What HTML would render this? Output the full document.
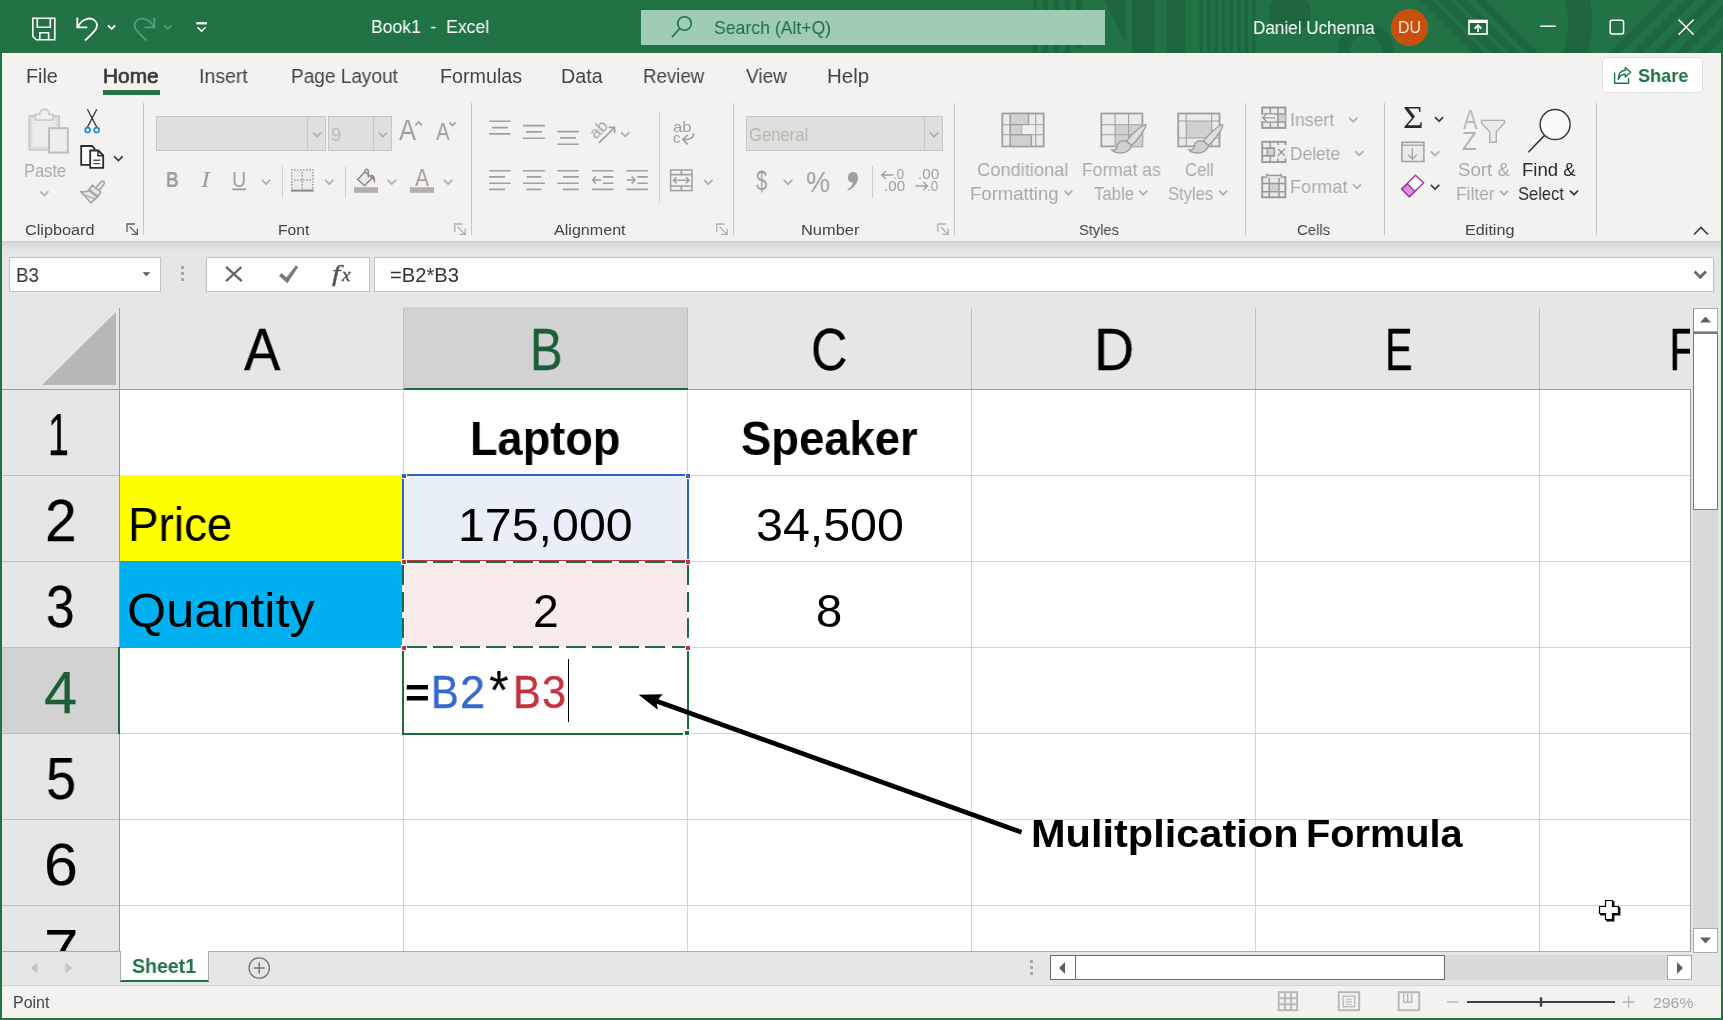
<!DOCTYPE html>
<html lang="en">
<head>
<meta charset="utf-8">
<title>Book1 - Excel</title>
<style>
html,body{margin:0;padding:0;background:#217346;}
body{width:1723px;height:1020px;overflow:hidden;position:relative;font-family:"Liberation Sans",sans-serif;}
#app{position:absolute;left:0;top:0;width:1723px;height:1020px;overflow:hidden;background:#217346;}
.b{position:absolute;box-sizing:border-box;}
.t{will-change:transform;position:absolute;white-space:pre;line-height:1;transform-origin:0 0;display:block;margin:0;padding:0;}
.sf{font-family:"Liberation Serif",serif;}
svg{position:absolute;left:0;top:0;overflow:visible;}
</style>
</head>
<body>
<div id="app">
<!-- window chrome backgrounds -->
<div class="b" style="left:0;top:0;width:1723px;height:53px;background:#217346"></div>
<div class="b" style="left:2px;top:53px;width:1719px;height:188px;background:#f3f2f1"></div>
<div class="b" style="left:2px;top:241px;width:1719px;height:745px;background:#e6e6e6"></div>
<div class="b" style="left:2px;top:241px;width:1719px;height:10px;background:linear-gradient(#cfcfcf,#dcdcdc 40%,#e6e6e6)"></div>
<div class="b" style="left:2px;top:985px;width:1719px;height:1px;background:#d2d2d2"></div>
<div class="b" style="left:2px;top:986px;width:1719px;height:32px;background:#f3f2f1"></div>
<!-- search box -->
<div class="b" style="left:641px;top:10px;width:464px;height:35px;background:#9fcdb3"></div>
<!-- avatar -->
<div class="b" style="left:1391px;top:9px;width:37px;height:37px;border-radius:50%;background:#c8500f"></div>
<!-- share -->
<div class="b" style="left:1602px;top:57px;width:101px;height:36px;background:#fff;border:1px solid #e1dfdd;border-radius:4px"></div>
<!-- home underline -->
<div class="b" style="left:103px;top:90px;width:57px;height:5px;background:#217346"></div>
<!-- ribbon combo boxes -->
<div class="b" style="left:156px;top:116px;width:170px;height:35px;background:#e1dfdd;border:1px solid #c8c6c4"></div>
<div class="b" style="left:307px;top:117px;width:1px;height:33px;background:#c8c6c4"></div>
<div class="b" style="left:328px;top:116px;width:64px;height:35px;background:#e1dfdd;border:1px solid #c8c6c4"></div>
<div class="b" style="left:373px;top:117px;width:1px;height:33px;background:#c8c6c4"></div>
<div class="b" style="left:746px;top:116px;width:197px;height:35px;background:#e1dfdd;border:1px solid #c8c6c4"></div>
<div class="b" style="left:924px;top:117px;width:1px;height:33px;background:#c8c6c4"></div>
<!-- formula bar -->
<div class="b" style="left:9px;top:257px;width:152px;height:35px;background:#fdfdfd;border:1px solid #c3c3c3"></div>
<div class="b" style="left:206px;top:257px;width:164px;height:35px;background:#fdfdfd;border:1px solid #c3c3c3"></div>
<div class="b" style="left:374px;top:257px;width:1340px;height:35px;background:#fdfdfd;border:1px solid #c3c3c3"></div>
<!-- sheet -->
<div class="b" style="left:120px;top:390px;width:1570px;height:561px;background:#fff"></div>
<!-- selected headers -->
<div class="b" style="left:404px;top:307px;width:283px;height:82px;background:#d2d2d2"></div>

<div class="b" style="left:2px;top:648px;width:116px;height:85px;background:#d2d2d2"></div>
<div class="b" style="left:118px;top:647px;width:2px;height:87px;background:#217346"></div>
<!-- cell fills -->
<div class="b" style="left:120px;top:475px;width:282px;height:86px;background:#ffff00"></div>
<div class="b" style="left:120px;top:561px;width:282px;height:87px;background:#00b0f0"></div>
<div class="b" style="left:405px;top:476px;width:282px;height:84px;background:#e9eff9"></div>
<div class="b" style="left:405px;top:563px;width:282px;height:83px;background:#f9ebeb"></div>
<svg width="1723" height="1020" viewBox="0 0 1723 1020" shape-rendering="crispEdges">
<rect x="403" y="390" width="1" height="561" fill="#d4d4d4"/>
<rect x="687" y="390" width="1" height="561" fill="#d4d4d4"/>
<rect x="971" y="390" width="1" height="561" fill="#d4d4d4"/>
<rect x="1255" y="390" width="1" height="561" fill="#d4d4d4"/>
<rect x="1539" y="390" width="1" height="561" fill="#d4d4d4"/>
<rect x="120" y="475" width="1570" height="1" fill="#d4d4d4"/>
<rect x="120" y="561" width="1570" height="1" fill="#d4d4d4"/>
<rect x="120" y="647" width="1570" height="1" fill="#d4d4d4"/>
<rect x="120" y="733" width="1570" height="1" fill="#d4d4d4"/>
<rect x="120" y="819" width="1570" height="1" fill="#d4d4d4"/>
<rect x="120" y="905" width="1570" height="1" fill="#d4d4d4"/>
<rect x="403" y="308" width="1" height="81" fill="#bdbdbd"/>
<rect x="687" y="308" width="1" height="81" fill="#bdbdbd"/>
<rect x="971" y="308" width="1" height="81" fill="#bdbdbd"/>
<rect x="1255" y="308" width="1" height="81" fill="#bdbdbd"/>
<rect x="1539" y="308" width="1" height="81" fill="#bdbdbd"/>
<rect x="2" y="475" width="117" height="1" fill="#bdbdbd"/>
<rect x="2" y="561" width="117" height="1" fill="#bdbdbd"/>
<rect x="2" y="647" width="117" height="1" fill="#bdbdbd"/>
<rect x="2" y="733" width="117" height="1" fill="#bdbdbd"/>
<rect x="2" y="819" width="117" height="1" fill="#bdbdbd"/>
<rect x="2" y="905" width="117" height="1" fill="#bdbdbd"/>
<rect x="2" y="389" width="1688" height="1" fill="#9b9b9b"/>
<rect x="119" y="308" width="1" height="643" fill="#9b9b9b"/>
<rect x="1690" y="389" width="1" height="562" fill="#9b9b9b"/>
<rect x="2" y="951" width="1689" height="1" fill="#ababab"/>
<polygon points="42,385 116,312 116,385" fill="#b7b7b7" shape-rendering="auto"/>
</svg>
<!-- re-cover grid inside filled cells and draw selection borders -->
<svg width="1723" height="1020" viewBox="0 0 1723 1020" shape-rendering="crispEdges">
<rect x="120" y="475" width="282" height="86" fill="#ffff00"/>
<rect x="120" y="561" width="282" height="87" fill="#00b0f0"/>
<!-- selected header green line redraw -->
<rect x="404" y="388" width="284" height="2" fill="#1c6b3c"/>
<rect x="118" y="647" width="2" height="87" fill="#1c6b3c"/>
<!-- B2 blue border -->
<rect x="402" y="474" width="287" height="2" fill="#2f63c4"/>
<rect x="402" y="474" width="2" height="87" fill="#2f63c4"/>
<rect x="687" y="474" width="2" height="87" fill="#2f63c4"/>
<rect x="404" y="476" width="1" height="84" fill="#fff"/>
<rect x="686" y="476" width="1" height="84" fill="#fff"/>
<!-- B3 red thin border -->
<rect x="402" y="560" width="287" height="1" fill="#c0323e"/>
<rect x="402" y="560" width="1" height="88" fill="#c0323e"/>
<rect x="688" y="560" width="1" height="88" fill="#c0323e"/>
<!-- B3 marching ants -->
<rect x="403" y="561" width="285" height="2" fill="#fff"/>
<rect x="403" y="646" width="285" height="2" fill="#fff"/>
<rect x="402" y="561" width="2" height="87" fill="#fff"/>
<rect x="686.5" y="561" width="2" height="87" fill="#fff"/>
<g stroke="#1e6b41" stroke-width="2" fill="none" stroke-dasharray="20 6.5">
<path d="M406.5 562H688"/>
<path d="M406.5 647H688"/>
<path d="M403 565V648"/>
<path d="M687.5 565V648"/>
</g>
<!-- B4 active border -->
<g fill="#1c6b3c">
<rect x="402" y="650" width="2" height="85" />
<rect x="687" y="651" width="2" height="78" />
<rect x="402" y="733" width="281" height="2" />
<rect x="684.5" y="730.5" width="5" height="5" stroke="#fff" stroke-width="1"/>
</g>
<!-- corner handles -->
<g stroke="#fff" stroke-width="1">
<rect x="401" y="473" width="5" height="5" fill="#2f63c4"/>
<rect x="685.3" y="473" width="5" height="5" fill="#2f63c4"/>
<rect x="401" y="559" width="5" height="5" fill="#c0323e"/>
<rect x="685.3" y="559" width="5" height="5" fill="#c0323e"/>
<rect x="401" y="645" width="5" height="5" fill="#c0323e"/>
<rect x="685.3" y="645" width="5" height="5" fill="#c0323e"/>
</g>
<!-- text cursor -->
<rect x="568" y="659" width="1" height="63" fill="#000"/>
</svg>
<!-- sheet tab -->
<div class="b" style="left:120px;top:951px;width:89px;height:29px;background:#fff"></div>
<div class="b" style="left:120px;top:980px;width:89px;height:2px;background:#217346"></div>
<div class="b" style="left:120px;top:951px;width:1px;height:30px;background:#ababab"></div>
<div class="b" style="left:208px;top:951px;width:1px;height:30px;background:#ababab"></div>
<!-- scrollbars -->
<div class="b" style="left:1693px;top:308px;width:25px;height:644px;background:#d9d9d9"></div>
<div class="b" style="left:1693px;top:308px;width:25px;height:24px;background:#fff;border:1px solid #ababab;border-left-color:#8a8a8a"></div>
<div class="b" style="left:1693px;top:332px;width:25px;height:178px;background:#fff;border:1px solid #7a7a7a;border-top:2px solid #7a7a7a"></div>
<div class="b" style="left:1693px;top:928px;width:25px;height:25px;background:#fff;border:1px solid #ababab"></div>
<div class="b" style="left:1050px;top:955px;width:642px;height:25px;background:#d9d9d9"></div>
<div class="b" style="left:1050px;top:955px;width:26px;height:25px;background:#fff;border:1px solid #6a6a6a"></div>
<div class="b" style="left:1075px;top:955px;width:370px;height:25px;background:#fff;border:1px solid #6a6a6a"></div>
<div class="b" style="left:1667px;top:955px;width:25px;height:25px;background:#fff;border:1px solid #ababab"></div>
<svg width="1723" height="1020" viewBox="0 0 1723 1020">
<!-- sheet nav arrows -->
<polygon points="30.5,968 37.5,962.5 37.5,973.5" fill="#c6c6c6"/>
<polygon points="72.5,968 65.5,962.5 65.5,973.5" fill="#c6c6c6"/>
<!-- new sheet -->
<circle cx="259.2" cy="968" r="10.2" fill="none" stroke="#767676" stroke-width="1.3"/>
<path d="M253.7 968H264.7M259.2 962.5V973.5" stroke="#767676" stroke-width="1.5" fill="none"/>
<!-- tab split dots -->
<g fill="#a6a6a6"><rect x="1030" y="960" width="3" height="3"/><rect x="1030" y="966" width="3" height="3"/><rect x="1030" y="972" width="3" height="3"/></g>
<!-- scrollbar arrows -->
<polygon points="1059,968 1065,962 1065,974" fill="#606060"/>
<polygon points="1683,968 1677,962 1677,974" fill="#606060"/>
<polygon points="1705.5,316.5 1700,322.5 1711,322.5" fill="#606060"/>
<polygon points="1705.5,943.5 1700,937.5 1711,937.5" fill="#606060"/>
<!-- status bar view icons -->
<g fill="none" stroke="#b9b7b5" stroke-width="1.9" transform="translate(-0.8,-0.3)">
<rect x="1279.5" y="992.5" width="18.5" height="18"/>
<path d="M1285.7 992.5V1010.5M1291.9 992.5V1010.5M1279.5 998.5H1298M1279.5 1004.5H1298"/>
<rect x="1339.5" y="992.5" width="20.5" height="18"/>
<rect x="1344" y="996.5" width="11.5" height="10.5" stroke-width="1.3"/>
<path d="M1346.5 999.5H1353M1346.5 1002H1353M1346.5 1004.5H1353" stroke-width="1"/>
<rect x="1399.5" y="992.5" width="20.5" height="18"/>
<path d="M1404.5 992.5V1002.5H1412.5V992.5M1408.5 992.5V1002.5" stroke-width="1.4"/>
</g>
<!-- zoom slider -->
<path d="M1447 1002H1458.5" stroke="#b5b3b1" stroke-width="1.3"/>
<path d="M1467 1002H1615" stroke="#404040" stroke-width="2"/>
<rect x="1539.8" y="997.3" width="2.4" height="9.4" fill="#404040"/>
<path d="M1623 1002H1634.5M1628.7 996.3V1007.7" stroke="#b5b3b1" stroke-width="1.3"/>
</svg>
<!-- annotation arrow + mouse cursor -->
<svg width="1723" height="1020" viewBox="0 0 1723 1020">
<path d="M1021.5 832.3L652 699.5" stroke="#000" stroke-width="4.8" fill="none"/>
<polygon points="638.6,694.8 662.6,694.2 656.4,701.4 657.8,709.8" fill="#000"/>
<!-- cell cursor -->
<g>
<path d="M1605.5 900.5h7v6h6v7h-6v6h-7v-6h-6v-7h6z" fill="#000" stroke="#000" stroke-width="1.2" transform="translate(1.3,1.3)"/>
<path d="M1605.5 900.5h7v6h6v7h-6v6h-7v-6h-6v-7h6z" fill="#fff" stroke="#000" stroke-width="1.2"/>
</g>
</svg>
<!-- title bar decoration + icons -->
<svg width="1723" height="1020" viewBox="0 0 1723 1020">
<defs><clipPath id="tb"><rect x="0" y="0" width="1723" height="53"/></clipPath></defs>
<g clip-path="url(#tb)" fill="#1e6640">
<rect x="1033" y="0" width="4" height="53"/><rect x="1043" y="0" width="5" height="53"/><rect x="1054" y="0" width="5" height="53"/><rect x="1065" y="0" width="5" height="53"/><rect x="1076" y="0" width="6" height="48"/>
<polygon points="1104,0 1126,0 1126,44"/>
<rect x="1132" y="0" width="23" height="53"/>
<rect x="1167" y="0" width="18" height="53"/>
<rect x="1199.5" y="0" width="3.5" height="53"/><rect x="1207" y="0" width="3.5" height="53"/><rect x="1214.5" y="0" width="3.5" height="53"/><rect x="1222" y="0" width="3.5" height="53"/><rect x="1229.5" y="0" width="3.5" height="53"/><rect x="1237" y="0" width="3.5" height="53"/><rect x="1244.5" y="0" width="3.5" height="53"/><rect x="1252" y="0" width="3.5" height="53"/>
<circle cx="1290" cy="13" r="21"/>
<circle cx="1366" cy="51" r="22" fill="none" stroke="#1e6640" stroke-width="12"/>
<g stroke="#1e6640" stroke-width="8" fill="none">
<path d="M1420 -6L1490 64M1438 -6L1508 64M1456 -6L1526 64M1474 -6L1544 64"/>
<path d="M1604 64L1684 -16M1626 64L1706 -16M1648 64L1728 -16M1670 64L1750 -16M1692 64L1772 -16"/>
</g>
<path d="M1565.3 -33A110 110 0 0 1 1565.3 77" fill="none" stroke="#1e6640" stroke-width="24"/>
</g>
<!-- search box over decoration handled by z-order: redraw -->
<rect x="641" y="10" width="464" height="35" fill="#9fcdb3"/>
<circle cx="1409.5" cy="27.5" r="18.3" fill="#c8500f"/>
<!-- save -->
<g fill="none" stroke="#fff" stroke-width="1.6" stroke-linejoin="miter">
<path d="M32.8 18.3H54.8V39.7H36.3L32.8 36.2Z"/>
<path d="M37.3 18.3V27.3H50.3V18.3"/>
<path d="M39.8 39.7V32.8H48.6V39.7"/>
</g>
<!-- undo -->
<g fill="none" stroke="#fff" stroke-width="1.8">
<path d="M77.3 17.5V27.4H87.3"/>
<path d="M78 27C81 19.5 90.5 15.8 95.2 21C99.5 26 96.5 30 85 40.5"/>
<path d="M108 25.3L111.6 28.9L115.2 25.3"/>
</g>
<!-- redo (dim) -->
<g fill="none" stroke="#58a07c" stroke-width="1.7">
<path d="M154.3 17.5V27.4H144.3"/>
<path d="M153.6 27C150.6 19.5 141.1 15.8 136.4 21C132.1 26 135.1 30 146.6 40.5"/>
<path d="M164.2 25.3L167.8 28.9L171.4 25.3"/>
</g>
<!-- customize QAT -->
<g fill="none" stroke="#fff" stroke-width="1.6">
<path d="M196.3 23.3H207" stroke-width="2.2"/>
<path d="M197.6 27.3L201.6 31.2L205.6 27.3"/>
</g>
<!-- search icon -->
<g fill="none" stroke="#1e6e42" stroke-width="1.6">
<circle cx="684.5" cy="23.5" r="6.8"/>
<path d="M679.6 28.4L671.9 37.3"/>
</g>
<!-- ribbon display options -->
<g fill="none" stroke="#fff" stroke-width="1.6">
<rect x="1469" y="20.5" width="18" height="13.5"/>
<path d="M1469 21.5H1487" stroke-width="3"/>
<path d="M1478 32V25.5M1474.6 28.6L1478 25.2L1481.4 28.6"/>
</g>
<!-- min / max / close -->
<g fill="none" stroke="#fff" stroke-width="1.5">
<path d="M1540.3 26.2H1555.8"/>
<rect x="1610.2" y="20.3" width="13.4" height="13.6" rx="2"/>
<path d="M1678.5 19.5L1693.7 34.8M1693.7 19.5L1678.5 34.8"/>
</g>
<!-- share icon -->
<g fill="none" stroke="#217346" stroke-width="1.4" stroke-linejoin="round">
<path d="M1614.6 72.4V83.2H1628.6V78"/>
<path d="M1625.3 67.6L1630.6 72.3L1625.3 77V74.3C1621.5 74.3 1619.5 76 1618.3 79.5C1618.3 74 1620.5 70.6 1625.3 70.3Z"/>
</g>
</svg>
<!-- ribbon icons -->
<svg width="1723" height="1020" viewBox="0 0 1723 1020">
<rect x="143.0" y="103" width="1" height="132" fill="#c8c6c4"/>
<rect x="471.0" y="103" width="1" height="132" fill="#c8c6c4"/>
<rect x="733.0" y="103" width="1" height="132" fill="#c8c6c4"/>
<rect x="954.0" y="103" width="1" height="132" fill="#c8c6c4"/>
<rect x="1245.0" y="103" width="1" height="132" fill="#c8c6c4"/>
<rect x="1384.0" y="103" width="1" height="132" fill="#c8c6c4"/>
<rect x="1596.0" y="103" width="1" height="132" fill="#c8c6c4"/>
<rect x="282.0" y="166" width="1" height="32" fill="#d2d0ce"/>
<rect x="345.0" y="166" width="1" height="32" fill="#d2d0ce"/>
<rect x="659.0" y="112" width="1" height="91" fill="#d2d0ce"/>
<rect x="872.0" y="166" width="1" height="32" fill="#d2d0ce"/>
<path d="M40.2 191.3L44.3 195.5L48.4 191.3" fill="none" stroke="#b0aeac" stroke-width="1.7"/>
<path d="M114.2 156.3L118.4 160.5L122.6 156.3" fill="none" stroke="#3b3a39" stroke-width="1.7"/>
<path d="M313.2 132.6L317.1 136.6L321.0 132.6" fill="none" stroke="#b0aeac" stroke-width="1.7"/>
<path d="M378.8 132.6L382.9 136.6L387.0 132.6" fill="none" stroke="#b0aeac" stroke-width="1.7"/>
<path d="M262.0 179.9L266.1 184.1L270.2 179.9" fill="none" stroke="#b0aeac" stroke-width="1.7"/>
<path d="M325.0 179.9L329.2 184.1L333.4 179.9" fill="none" stroke="#b0aeac" stroke-width="1.7"/>
<path d="M387.6 179.9L391.8 184.1L396.0 179.9" fill="none" stroke="#b0aeac" stroke-width="1.7"/>
<path d="M443.9 179.9L448.1 184.1L452.4 179.9" fill="none" stroke="#b0aeac" stroke-width="1.7"/>
<path d="M621.0 132.1L625.1 136.3L629.3 132.1" fill="none" stroke="#b0aeac" stroke-width="1.7"/>
<path d="M704.0 179.8L708.3 184.2L712.6 179.8" fill="none" stroke="#b0aeac" stroke-width="1.7"/>
<path d="M929.7 132.4L934.0 136.8L938.4 132.4" fill="none" stroke="#b0aeac" stroke-width="1.7"/>
<path d="M783.7 179.8L788.0 184.2L792.4 179.8" fill="none" stroke="#b0aeac" stroke-width="1.7"/>
<path d="M1064.4 190.7L1068.3 194.7L1072.3 190.7" fill="none" stroke="#b0aeac" stroke-width="1.7"/>
<path d="M1139.4 190.7L1143.3 194.7L1147.3 190.7" fill="none" stroke="#b0aeac" stroke-width="1.7"/>
<path d="M1219.3 190.7L1223.2 194.7L1227.2 190.7" fill="none" stroke="#b0aeac" stroke-width="1.7"/>
<path d="M1349.0 117.6L1353.2 121.8L1357.4 117.6" fill="none" stroke="#b0aeac" stroke-width="1.7"/>
<path d="M1355.0 151.1L1359.2 155.3L1363.3 151.1" fill="none" stroke="#b0aeac" stroke-width="1.7"/>
<path d="M1353.0 184.4L1357.0 188.4L1361.0 184.4" fill="none" stroke="#b0aeac" stroke-width="1.7"/>
<path d="M1435.0 117.2L1439.1 121.4L1443.2 117.2" fill="none" stroke="#3b3a39" stroke-width="1.7"/>
<path d="M1430.8 151.3L1435.0 155.5L1439.3 151.3" fill="none" stroke="#b0aeac" stroke-width="1.7"/>
<path d="M1430.8 184.9L1435.0 189.1L1439.3 184.9" fill="none" stroke="#3b3a39" stroke-width="1.7"/>
<path d="M1500.0 190.7L1504.0 194.7L1508.0 190.7" fill="none" stroke="#b0aeac" stroke-width="1.7"/>
<path d="M1570.0 190.7L1574.0 194.7L1578.0 190.7" fill="none" stroke="#3b3a39" stroke-width="1.7"/>
<path d="M1694 234.5L1701 227.5L1708 234.5" fill="none" stroke="#3b3a39" stroke-width="1.7"/>
<g fill="none" stroke="#605e5c" stroke-width="1.3"><path d="M127.0 231.9V224.0H134.9"/><path d="M130.0 227.0L137.4 234.4M137.4 228.6V234.4H131.6"/></g>
<g fill="none" stroke="#b0aeac" stroke-width="1.3"><path d="M454.8 231.9V224.0H462.7"/><path d="M457.8 227.0L465.2 234.4M465.2 228.6V234.4H459.4"/></g>
<g fill="none" stroke="#b0aeac" stroke-width="1.3"><path d="M716.8000000000001 231.9V224.0H724.7"/><path d="M719.8000000000001 227.0L727.2 234.4M727.2 228.6V234.4H721.4000000000001"/></g>
<g fill="none" stroke="#b0aeac" stroke-width="1.3"><path d="M937.8000000000001 231.9V224.0H945.7"/><path d="M940.8000000000001 227.0L948.2 234.4M948.2 228.6V234.4H942.4000000000001"/></g>
<!-- clipboard group -->
<g>
<rect x="29.4" y="116.1" width="29.5" height="33.6" fill="#ececec" stroke="#c8c8c8" stroke-width="2"/>
<rect x="31.4" y="118.1" width="25.5" height="29.6" fill="none" stroke="#dedede" stroke-width="2"/>
<path d="M35.4 120V114.3H39.6C39.6 107.6 49 107.6 49 114.3H53V120Z" fill="#f1f1f1" stroke="#c8c8c8" stroke-width="1.7"/>
<rect x="49" y="128.2" width="18.8" height="24.4" fill="#eeeeee" stroke="#bdbdbd" stroke-width="2"/>
</g>
<g fill="none" stroke="#3b3a39" stroke-width="1.3">
<path d="M87.4 109.2L96.9 127.4M96.8 109.2L87.3 127.4"/>
</g>
<g fill="#fff" stroke="#1e8ad6" stroke-width="1.7">
<circle cx="87.6" cy="130.1" r="2.4"/><circle cx="96.6" cy="130.1" r="2.4"/>
</g>
<g fill="#fafafa" stroke="#2b2b2b" stroke-width="1.8" stroke-linejoin="miter">
<path d="M81.2 146H92L94.5 148.5V164.8H81.2Z"/>
<path d="M90.2 150.5H98.3L103.2 155.4V167.8H90.2Z" fill="#fff"/>
<path d="M98 150.5V155.7H103.2" fill="none" stroke-width="1.5"/>
<path d="M93.2 160.3H100.3M93.2 163.6H100.3" stroke-width="1.4" stroke="#555"/>
</g>
<g fill="#e8e6e4" stroke="#a8a6a4" stroke-width="1.7" stroke-linejoin="round">
<path d="M101.6 181.4C103.4 180.2 105.2 182.4 104 184L98.9 190.6L95.6 188Z" fill="#f3f2f1"/>
<path d="M92.2 185.2L100.8 192.2L97.8 196.4L89.2 189.6Z"/>
<path d="M89 190.5C86.5 191.8 83.5 192 80.8 191.7L90.8 202.8L97.4 196.8Z"/>
<path d="M85.5 195C88.5 196.8 91.5 198 94.6 198.4" fill="none" stroke-width="1.2"/>
</g>
<!-- font group -->
<g fill="none" stroke="#a19f9d" stroke-width="1.7">
<path d="M415.4 125.4L418.6 122L421.8 125.4"/>
<path d="M449.3 122.3L452.5 125.5L455.7 122.3"/>
<path d="M232.3 189.3H246" stroke-width="1.9"/>
</g>
<!-- borders icon -->
<rect x="292" y="170" width="21" height="20" fill="#eeedec"/>
<g fill="#9a9896"><rect x="291.05" y="169.15" width="1.5" height="1.5"/><rect x="294.06" y="169.15" width="1.5" height="1.5"/><rect x="297.08" y="169.15" width="1.5" height="1.5"/><rect x="300.10" y="169.15" width="1.5" height="1.5"/><rect x="303.11" y="169.15" width="1.5" height="1.5"/><rect x="306.12" y="169.15" width="1.5" height="1.5"/><rect x="309.14" y="169.15" width="1.5" height="1.5"/><rect x="312.16" y="169.15" width="1.5" height="1.5"/><rect x="291.05" y="172.14" width="1.5" height="1.5"/><rect x="312.15" y="172.14" width="1.5" height="1.5"/><rect x="301.45" y="172.14" width="1.5" height="1.5"/><rect x="291.05" y="175.12" width="1.5" height="1.5"/><rect x="312.15" y="175.12" width="1.5" height="1.5"/><rect x="301.45" y="175.12" width="1.5" height="1.5"/><rect x="291.05" y="178.11" width="1.5" height="1.5"/><rect x="312.15" y="178.11" width="1.5" height="1.5"/><rect x="301.45" y="178.11" width="1.5" height="1.5"/><rect x="291.05" y="181.09" width="1.5" height="1.5"/><rect x="312.15" y="181.09" width="1.5" height="1.5"/><rect x="301.45" y="181.09" width="1.5" height="1.5"/><rect x="291.05" y="184.08" width="1.5" height="1.5"/><rect x="312.15" y="184.08" width="1.5" height="1.5"/><rect x="301.45" y="184.08" width="1.5" height="1.5"/><rect x="291.05" y="187.06" width="1.5" height="1.5"/><rect x="312.15" y="187.06" width="1.5" height="1.5"/><rect x="301.45" y="187.06" width="1.5" height="1.5"/><rect x="294.06" y="179.35" width="1.5" height="1.5"/><rect x="297.08" y="179.35" width="1.5" height="1.5"/><rect x="300.10" y="179.35" width="1.5" height="1.5"/><rect x="303.11" y="179.35" width="1.5" height="1.5"/><rect x="306.12" y="179.35" width="1.5" height="1.5"/><rect x="309.14" y="179.35" width="1.5" height="1.5"/></g>
<rect x="291" y="189.6" width="22.7" height="2" fill="#8a8886"/>
<!-- fill colour bucket -->
<g fill="none" stroke="#8f8d8b" stroke-width="1.5" stroke-linejoin="miter">
<path d="M365 171.8L372.2 177.8L364.5 185.8L357.8 179.4Z" fill="#ebebeb"/>
<path d="M365.2 172.2C364.8 168.6 368.4 168.4 368.3 171.5V177.5"/>
</g>
<path d="M371 174.5C373.5 174.2 376.2 177.5 374.9 184C373.8 180.5 372.6 178.6 370.6 177Z" fill="#8f8d8b"/>
<rect x="354" y="187.2" width="24" height="5.6" fill="#b3aeab"/>
<rect x="410" y="187.2" width="24" height="5.6" fill="#b3aeab"/>
<!-- alignment group -->
<g fill="none" stroke="#a19f9d" stroke-width="1.6">
<path d="M489.2 121.3H510.7M492 127.6H508M489.2 133.9H510.7"/>
<path d="M523 125.6H544.8M526 131.9H541.8M523 138.2H544.8"/>
<path d="M557.3 131.6H578.8M560 137.9H576M557.3 144.2H578.8"/>
<path d="M489.2 170.7H510.7M489.2 176.9H505M489.2 183.2H510.7M489.2 189.4H505"/>
<path d="M523 170.7H544.8M526.5 176.9H541.3M523 183.2H544.8M526.5 189.4H541.3"/>
<path d="M557.3 170.7H578.8M563 176.9H578.8M557.3 183.2H578.8M563 189.4H578.8"/>
<path d="M592.2 170.7H613.5M603 176.9H613.5M603 183.2H613.5M592.2 189.4H613.5M592.6 180H601M596 176.5L592.6 180L596 183.5"/>
<path d="M626.3 170.7H647.8M637.3 176.9H647.8M637.3 183.2H647.8M626.3 189.4H647.8M626.6 180H635M631.6 176.5L635 180L631.6 183.5"/>
<!-- orientation arrow -->
<path d="M598.9 142.9L614.4 127.6M608.8 127.4H614.6V133"/>
<!-- wrap arrow -->
<path d="M693.4 133.3C694 137.5 690.5 139.8 683.2 139.6M687.7 134.8L682.8 139.6L687.7 144.4"/>
<!-- merge -->
<rect x="670.6" y="170" width="21.4" height="20.6" stroke-width="1.5"/>
<path d="M670.6 174.6H692M670.6 186H692M681.3 170V174.6M681.3 186V190.6"/>
<path d="M673.5 180.3H689M676.5 177.3L673.5 180.3L676.5 183.3M686 177.3L689 180.3L686 183.3"/>
</g>
<!-- number group: comma glyph + decimals arrows -->
<path d="M851.5 172.3C855.5 171.3 858.3 173.8 858 178C857.6 183.5 853.5 188.5 847.8 190.6L847.3 189.6C850.8 187.8 852.8 185 852.6 182.3C849.8 182.6 847.6 180.3 847.8 177.3C848 174.8 849.5 173 851.5 172.3Z" fill="#a19f9d"/>
<g fill="none" stroke="#a19f9d" stroke-width="1.3">
<path d="M881.8 175H893.5M886 171L881.8 175L886 179"/>
<path d="M915.5 186H927.5M923.3 182L927.5 186L923.3 190"/>
</g>
<!-- styles group -->
<g stroke="#a19f9d" stroke-width="1.4" fill="none">
<rect x="1002.3" y="113.5" width="41.4" height="32.9" fill="#edebe9" stroke-width="1.8"/>
<path d="M1010.3 113.5V146.4M1035.7 113.5V146.4M1028.5 113.5V146.4M1002.3 124.7H1043.7M1002.3 134.8H1043.7" stroke-width="1.1"/>
<rect x="1010.3" y="113.5" width="18.2" height="11.2" fill="#d2d0ce"/>
<rect x="1010.3" y="124.7" width="11.9" height="10.1" fill="#d2d0ce"/>
<rect x="1022.2" y="125.4" width="13" height="8.8" fill="#f0efee" stroke="none"/>
<rect x="1010.3" y="134.8" width="21.1" height="11.6" fill="#d2d0ce"/>
<!-- format as table -->
<rect x="1101.3" y="113.5" width="41.1" height="32.9" fill="#edebe9" stroke-width="1.8"/>
<rect x="1115.1" y="124.7" width="27.3" height="21.7" fill="#d2d0ce" stroke="none"/>
<path d="M1115.1 113.5V146.4M1128.6 113.5V146.4M1101.3 124.7H1142.4M1101.3 134.8H1142.4" stroke-width="1.1"/>
<g id="brush">
<path d="M1145.8 124.6C1146.5 127.5 1137.5 140.5 1131.5 145.3L1126.3 141.3C1131.5 134.5 1142.5 124.3 1145.8 124.6Z" fill="#e1dfdd"/>
<path d="M1126 141.2C1121 139.5 1116.5 143 1117.3 147.2C1116.6 149 1114.3 150 1111.8 150C1117 154.5 1128.5 154.6 1131.7 145.4Z" fill="#d2d0ce"/>
</g>
<!-- cell styles -->
<rect x="1178.2" y="113.5" width="41.3" height="32.9" fill="#edebe9" stroke-width="1.8"/>
<rect x="1186.2" y="121" width="25.5" height="17" fill="#d2d0ce" stroke="none"/>
<path d="M1186.2 113.5V146.4M1211.7 113.5V146.4M1178.2 121H1219.5M1178.2 138H1219.5" stroke-width="1.1"/>
<use href="#brush" x="77"/>
</g>
<!-- cells group -->
<g stroke="#9a9896" stroke-width="1.9" fill="none">
<rect x="1262.2" y="107.5" width="23.2" height="20.4" fill="#edebe9"/>
<rect x="1277.9" y="113.9" width="7.5" height="8.1" fill="#d2d0ce" stroke="none"/>
<path d="M1270.3 107.5V127.9M1277.9 107.5V127.9M1262.2 113.9H1285.4M1262.2 122H1285.4" stroke-width="1.5"/>
<rect x="1261.4" y="114.6" width="12.6" height="6.6" fill="#f3f2f1" stroke="none"/>
<path d="M1263 117.8H1275M1266.8 113.8L1262.8 117.8L1266.8 121.8" stroke-width="1.3"/>
<rect x="1262.2" y="141.8" width="23.2" height="20.3" fill="#edebe9"/>
<path d="M1270.3 141.8V162.1M1277.9 141.8V162.1M1262.2 148.2H1285.4M1262.2 155.7H1285.4" stroke-width="1.5"/>
<rect x="1275" y="145" width="11.5" height="13.5" fill="#f0efee" stroke="none"/>
<rect x="1267.4" y="148.2" width="7" height="7.5" fill="#d2d0ce" stroke-width="1.5"/>
<path d="M1278 148.8L1284.8 155.7M1284.8 148.8L1278 155.7" stroke-width="1.3"/>
<rect x="1262.2" y="177.2" width="23.2" height="20.1" fill="#edebe9"/>
<rect x="1269.2" y="183.6" width="9.8" height="8.1" fill="#d2d0ce" stroke="none"/>
<path d="M1269.2 177.2V197.3M1279 177.2V197.3M1262.2 183.6H1285.4M1262.2 191.7H1285.4" stroke-width="1.5"/>
<rect x="1265.5" y="173.5" width="17" height="4.4" fill="#f3f2f1" stroke="none"/>
<path d="M1266.8 173.4V177.6M1281.3 173.4V177.6M1266.8 175.5H1281.3" stroke-width="1.5"/>
</g>
<!-- editing group -->
<g stroke="#a19f9d" stroke-width="1.5" fill="none">
<rect x="1401.9" y="142.3" width="22" height="19.2" fill="#ebebeb"/>
<path d="M1401.9 145.2H1423.9" stroke-width="1.2"/>
<path d="M1412.3 148.2V159M1407.8 154.6L1412.3 159.1L1416.8 154.6" stroke-width="1.3"/>
</g>
<g stroke="#a33ea1" stroke-width="1.5" stroke-linejoin="miter">
<path d="M1415.4 175.2L1423.6 182.7L1409.3 196.7L1401.7 189.1Z" fill="#fbfbfb"/>
<path d="M1407.3 183.7L1414.9 191.4L1409.3 196.7L1401.7 189.1Z" fill="#d992dc"/>
</g>
<!-- sort funnel -->
<path d="M1481.5 120.4H1504.5V123L1496.3 131.8V142.3H1489.7V131.8L1481.5 123Z" fill="#edebe9" stroke="#b0aeac" stroke-width="1.4"/>
<!-- find magnifier -->
<circle cx="1555.1" cy="124.6" r="15" fill="#fafafa" stroke="#3b3a39" stroke-width="1.5"/>
<path d="M1544.3 135.6L1528.3 152.2" stroke="#3b3a39" stroke-width="1.6" fill="none"/>
<!-- formula bar icons -->
<g fill="#a6a6a6"><rect x="181" y="266" width="3" height="3"/><rect x="181" y="272" width="3" height="3"/><rect x="181" y="278" width="3" height="3"/></g>
<path d="M226 266.8L241.8 281.2M241.4 267L226 281.2" stroke="#666" stroke-width="2.3" fill="none"/>
<path d="M279 275.8L281.6 273L286.4 277.6L295.8 265.6L298.2 267L287.4 283.2Z" fill="#7a7a7a"/>
<polygon points="142.5,272.3 150.3,272.3 146.4,276.3" fill="#605e5c"/>
<path d="M1694.6 271.6L1700.3 277.2L1706 271.6" stroke="#666" stroke-width="2.8" fill="none"/>
</svg>
<!-- texts -->
<span class="t" style="left:371.05px;top:18.00px;font-size:18.84px;color:#fff;transform:scaleX(0.9325);">Book1  -  Excel</span>
<span class="t" style="left:714.06px;top:19.00px;font-size:18.26px;color:#1e6e42;transform:scaleX(0.9662);">Search (Alt+Q)</span>
<span class="t" style="left:1253.19px;top:19.00px;font-size:18.26px;color:#fff;transform:scaleX(0.9370);">Daniel Uchenna</span>
<span class="t" style="left:1397.51px;top:20.00px;font-size:15.94px;color:#fbe3d6;transform:scaleX(0.9857);">DU</span>
<span class="t" style="left:25.88px;top:67.00px;font-size:19.71px;color:#444;transform:scaleX(1.0039);">File</span>
<span class="t" style="left:198.95px;top:67.00px;font-size:19.71px;color:#444;transform:scaleX(0.9896);">Insert</span>
<span class="t" style="left:291.44px;top:67.00px;font-size:19.71px;color:#444;transform:scaleX(0.9665);">Page Layout</span>
<span class="t" style="left:440.14px;top:67.00px;font-size:19.71px;color:#444;transform:scaleX(0.9974);">Formulas</span>
<span class="t" style="left:561.40px;top:67.00px;font-size:19.71px;color:#444;transform:scaleX(0.9905);">Data</span>
<span class="t" style="left:642.72px;top:67.00px;font-size:19.71px;color:#444;transform:scaleX(0.9480);">Review</span>
<span class="t" style="left:745.50px;top:67.00px;font-size:19.71px;color:#444;transform:scaleX(0.9676);">View</span>
<span class="t" style="left:827.07px;top:67.00px;font-size:19.71px;color:#444;transform:scaleX(1.0421);">Help</span>
<span class="t" style="left:103.14px;top:67.00px;font-size:19.71px;color:#3b3a39;-webkit-text-stroke:0.7px #3b3a39;transform:scaleX(1.0588);">Home</span>
<span class="t" style="left:1638.22px;top:66.00px;font-size:19.28px;color:#217346;font-weight:700;transform:scaleX(0.9430);">Share</span>
<span class="t" style="left:25.22px;top:222.00px;font-size:15.36px;color:#444;transform:scaleX(1.0581);">Clipboard</span>
<span class="t" style="left:278.48px;top:222.00px;font-size:15.36px;color:#444;transform:scaleX(1.0200);">Font</span>
<span class="t" style="left:554.30px;top:222.00px;font-size:15.36px;color:#444;transform:scaleX(1.0481);">Alignment</span>
<span class="t" style="left:801.43px;top:222.00px;font-size:15.36px;color:#444;transform:scaleX(1.0683);">Number</span>
<span class="t" style="left:1078.73px;top:222.00px;font-size:15.36px;color:#444;transform:scaleX(0.9526);">Styles</span>
<span class="t" style="left:1297.40px;top:222.00px;font-size:15.36px;color:#444;transform:scaleX(0.9707);">Cells</span>
<span class="t" style="left:1465.45px;top:222.00px;font-size:15.36px;color:#444;transform:scaleX(1.0531);">Editing</span>
<span class="t" style="left:23.54px;top:162.00px;font-size:18.26px;color:#abaaa8;transform:scaleX(0.9013);">Paste</span>
<span class="t" style="left:331.16px;top:127.00px;font-size:17.46px;color:#bbb8b5;transform:scaleX(1.0599);">9</span>
<span class="t" style="left:749.03px;top:126.00px;font-size:18.55px;color:#b8b5b2;transform:scaleX(0.8979);">General</span>
<span class="t" style="left:165.98px;top:170.00px;font-size:21.45px;color:#a19f9d;font-weight:700;transform:scaleX(0.8178);">B</span>
<span class="t sf" style="left:201.23px;top:169.00px;font-size:22.60px;color:#a19f9d;font-style:italic;transform:scaleX(1.1928);">I</span>
<span class="t" style="left:232.18px;top:170.00px;font-size:21.45px;color:#a19f9d;transform:scaleX(0.9156);">U</span>
<span class="t" style="left:399.20px;top:116.00px;font-size:28.70px;color:#a19f9d;transform:scaleX(0.8893);">A</span>
<span class="t" style="left:435.90px;top:121.00px;font-size:23.04px;color:#a19f9d;transform:scaleX(0.8873);">A</span>
<span class="t" style="left:415.20px;top:166.00px;font-size:24.20px;color:#a19f9d;transform:scaleX(0.8748);">A</span>
<span class="t" style="left:755.50px;top:168.00px;font-size:27.00px;color:#a19f9d;transform:scaleX(0.7533);">$</span>
<span class="t" style="left:805.50px;top:167.00px;font-size:30.00px;color:#a19f9d;transform:scaleX(0.9000);">%</span>
<span class="t" style="left:976.65px;top:161.00px;font-size:18.55px;color:#abaaa8;transform:scaleX(0.9866);">Conditional</span>
<span class="t" style="left:970.08px;top:185.00px;font-size:18.55px;color:#abaaa8;transform:scaleX(0.9965);">Formatting</span>
<span class="t" style="left:1081.76px;top:161.00px;font-size:18.55px;color:#abaaa8;transform:scaleX(0.9439);">Format as</span>
<span class="t" style="left:1093.60px;top:185.00px;font-size:18.55px;color:#abaaa8;transform:scaleX(0.9053);">Table</span>
<span class="t" style="left:1184.54px;top:161.00px;font-size:18.55px;color:#abaaa8;transform:scaleX(0.8988);">Cell</span>
<span class="t" style="left:1167.73px;top:185.00px;font-size:18.55px;color:#abaaa8;transform:scaleX(0.8934);">Styles</span>
<span class="t" style="left:1289.97px;top:111.00px;font-size:18.55px;color:#abaaa8;transform:scaleX(0.9529);">Insert</span>
<span class="t" style="left:1290.17px;top:145.00px;font-size:18.55px;color:#abaaa8;transform:scaleX(0.9364);">Delete</span>
<span class="t" style="left:1290.11px;top:178.00px;font-size:18.55px;color:#abaaa8;transform:scaleX(0.9791);">Format</span>
<span class="t" style="left:1457.62px;top:161.00px;font-size:18.55px;color:#abaaa8;transform:scaleX(1.0082);">Sort &amp;</span>
<span class="t" style="left:1455.57px;top:185.00px;font-size:18.55px;color:#abaaa8;transform:scaleX(0.9373);">Filter</span>
<span class="t" style="left:1522.18px;top:161.00px;font-size:18.55px;color:#2b2b2b;transform:scaleX(0.9993);">Find &amp;</span>
<span class="t" style="left:1517.93px;top:185.00px;font-size:18.55px;color:#2b2b2b;transform:scaleX(0.8919);">Select</span>
<span class="t sf" style="left:1402.67px;top:102.00px;font-size:31.46px;color:#2b2b2b;transform:scaleX(1.1250);">Σ</span>
<span class="t" style="left:1463.20px;top:107.00px;font-size:26.96px;color:#bab8b5;transform:scaleX(0.8056);">A</span>
<span class="t" style="left:1462.42px;top:128.00px;font-size:26.38px;color:#b3b0ad;transform:scaleX(0.9214);">Z</span>
<span class="t" style="left:673.03px;top:120.00px;font-size:14.80px;color:#a19f9d;transform:scaleX(1.1357);">ab</span>
<span class="t" style="left:673.10px;top:131.00px;font-size:14.80px;color:#a19f9d;transform:scaleX(1.0137);">c</span>
<span class="t" style="left:589.23px;top:121.00px;font-size:16.50px;color:#a19f9d;transform-origin:9.4px 8.0px;transform:rotate(-45deg);">ab</span>
<span class="t" style="left:893.38px;top:167.00px;font-size:14.51px;color:#a19f9d;transform:scaleX(0.9193);">.0</span>
<span class="t" style="left:883.55px;top:179.00px;font-size:14.51px;color:#a19f9d;transform:scaleX(1.0465);">.00</span>
<span class="t" style="left:917.55px;top:167.00px;font-size:14.51px;color:#a19f9d;transform:scaleX(1.0519);">.00</span>
<span class="t" style="left:927.37px;top:179.00px;font-size:14.51px;color:#a19f9d;transform:scaleX(0.9288);">.0</span>
<span class="t" style="left:16.06px;top:266.00px;font-size:19.42px;color:#333;transform:scaleX(0.9626);">B3</span>
<span class="t" style="left:390.41px;top:266.00px;font-size:19.42px;color:#333;transform:scaleX(1.0374);">=B2*B3</span>
<span class="t sf" style="left:331.80px;top:261.00px;font-size:24.00px;color:#555;font-style:italic;-webkit-text-stroke:0.4px #555;transform:scaleX(1.2444);">f</span>
<span class="t sf" style="left:341.94px;top:265.00px;font-size:19.00px;color:#555;font-style:italic;-webkit-text-stroke:0.4px #555;transform:scaleX(1.0076);">x</span>
<span class="t" style="left:243.70px;top:320.00px;font-size:59.57px;color:#000;-webkit-text-stroke:0.3px #000;transform:scaleX(0.9150);">A</span>
<span class="t" style="left:530.22px;top:320.00px;font-size:59.57px;color:#1b5e38;-webkit-text-stroke:0.3px #1b5e38;transform:scaleX(0.8211);">B</span>
<span class="t" style="left:811.03px;top:320.00px;font-size:59.57px;color:#000;-webkit-text-stroke:0.3px #000;transform:scaleX(0.8476);">C</span>
<span class="t" style="left:1093.85px;top:320.00px;font-size:59.57px;color:#000;-webkit-text-stroke:0.3px #000;transform:scaleX(0.9334);">D</span>
<span class="t" style="left:1384.97px;top:320.00px;font-size:59.57px;color:#000;-webkit-text-stroke:0.3px #000;transform:scaleX(0.6931);">E</span>
<div class="b" style="left:1539px;top:308px;width:151px;height:81px;overflow:hidden"><span class="t" style="left:129.56px;top:12.00px;font-size:59.57px;color:#000;-webkit-text-stroke:0.3px #000;transform:scaleX(0.7597);">F</span></div>
<span class="t" style="left:48.29px;top:405.00px;font-size:59.30px;color:#000;-webkit-text-stroke:0.25px #000;transform:scaleX(0.6283);">1</span>
<span class="t" style="left:45.28px;top:491.00px;font-size:59.30px;color:#000;-webkit-text-stroke:0.25px #000;transform:scaleX(0.9568);">2</span>
<span class="t" style="left:46.27px;top:577.00px;font-size:59.30px;color:#000;-webkit-text-stroke:0.25px #000;transform:scaleX(0.8674);">3</span>
<span class="t" style="left:43.90px;top:663.00px;font-size:59.30px;color:#1b5e38;-webkit-text-stroke:0.25px #1b5e38;transform:scaleX(1.0046);">4</span>
<span class="t" style="left:46.42px;top:749.00px;font-size:59.30px;color:#000;-webkit-text-stroke:0.25px #000;transform:scaleX(0.9123);">5</span>
<span class="t" style="left:44.13px;top:835.00px;font-size:59.30px;color:#000;-webkit-text-stroke:0.25px #000;transform:scaleX(1.0254);">6</span>
<div class="b" style="left:2px;top:905px;width:117px;height:46px;overflow:hidden"><span class="t" style="left:42.06px;top:16.00px;font-size:59.30px;color:#000;-webkit-text-stroke:0.25px #000;transform:scaleX(1.0403);">7</span></div>
<span class="t" style="left:470.26px;top:415.00px;font-size:47.68px;color:#000;font-weight:700;transform:scaleX(0.9461);">Laptop</span>
<span class="t" style="left:740.98px;top:415.00px;font-size:47.68px;color:#000;font-weight:700;transform:scaleX(0.9520);">Speaker</span>
<span class="t" style="left:127.74px;top:501.00px;font-size:47.97px;color:#000;transform:scaleX(0.9554);">Price</span>
<span class="t" style="left:127.39px;top:587.00px;font-size:47.68px;color:#000;transform:scaleX(1.0570);">Quantity</span>
<span class="t" style="left:458.21px;top:502.00px;font-size:46.20px;color:#000;transform:scaleX(1.0459);">175,000</span>
<span class="t" style="left:756.20px;top:502.00px;font-size:46.20px;color:#000;transform:scaleX(1.0469);">34,500</span>
<span class="t" style="left:532.81px;top:588.00px;font-size:46.34px;color:#000;transform:scaleX(0.9939);">2</span>
<span class="t" style="left:816.26px;top:588.00px;font-size:46.34px;color:#000;transform:scaleX(1.0182);">8</span>
<span class="t" style="left:404.75px;top:673.00px;font-size:40.00px;color:#000;font-weight:700;transform:scaleX(1.0570);">=</span>
<span class="t" style="left:431.23px;top:669.00px;font-size:46.96px;color:#3568cc;-webkit-text-stroke:0.4px #3568cc;transform:scaleX(0.8849);">B</span>
<span class="t" style="left:460.25px;top:670.00px;font-size:45.92px;color:#3568cc;-webkit-text-stroke:0.4px #3568cc;transform:scaleX(0.9774);">2</span>
<span class="t" style="left:489.11px;top:662.00px;font-size:56.00px;color:#000;transform:scaleX(0.9045);">*</span>
<span class="t" style="left:513.24px;top:669.00px;font-size:46.96px;color:#c5313e;-webkit-text-stroke:0.4px #c5313e;transform:scaleX(0.8846);">B</span>
<span class="t" style="left:541.95px;top:670.00px;font-size:45.92px;color:#c5313e;-webkit-text-stroke:0.4px #c5313e;transform:scaleX(0.9396);">3</span>
<span class="t" style="left:1030.51px;top:814.00px;font-size:39.13px;color:#000;font-weight:700;transform:scaleX(1.0612);">Mulitplication</span>
<span class="t" style="left:1305.53px;top:814.00px;font-size:39.13px;color:#000;font-weight:700;transform:scaleX(1.0146);">Formula</span>
<span class="t" style="left:131.73px;top:957.00px;font-size:19.93px;color:#217346;font-weight:700;transform:scaleX(0.9811);">Sheet1</span>
<span class="t" style="left:12.76px;top:995.00px;font-size:15.94px;color:#444;transform:scaleX(0.9929);">Point</span>
<span class="t" style="left:1652.70px;top:995.00px;font-size:15.21px;color:#a6a6a6;transform:scaleX(1.0421);">296%</span>
</div>
</body>
</html>
